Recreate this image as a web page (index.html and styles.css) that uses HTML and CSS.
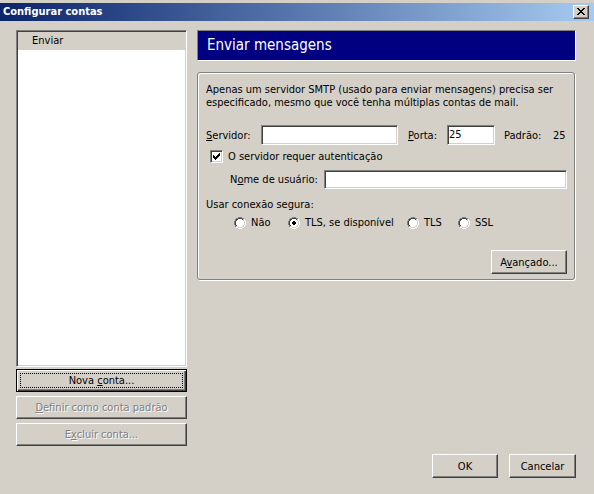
FILE: index.html
```html
<!DOCTYPE html>
<html>
<head>
<meta charset="utf-8">
<title>Configurar contas</title>
<link rel="stylesheet" href="styles.css">
</head>
<body>
<svg class="defs" width="0" height="0" aria-hidden="true">
  <symbol id="radio" viewBox="0 0 12 12">
    <path fill="#808080" d="M4 0h4v1h-4z M2 1h2v1h-2z M8 1h2v1h-2z M1 2h1v2h-1z M0 4h1v4h-1z M1 8h1v2h-1z"/>
    <path fill="#ffffff" d="M10 2h1v2h-1z M11 4h1v4h-1z M10 8h1v2h-1z M2 10h2v1h-2z M8 10h2v1h-2z M4 11h4v1h-4z"/>
    <path fill="#404040" d="M4 1h4v1h-4z M2 2h2v1h-2z M8 2h1v1h-1z M2 3h1v1h-1z M1 4h1v4h-1z M2 8h1v1h-1z"/>
    <path fill="#d4d0c8" d="M9 2h1v1h-1z M9 3h1v1h-1z M10 4h1v4h-1z M9 8h1v1h-1z M2 9h2v1h-2z M8 9h2v1h-2z M4 10h4v1h-4z"/>
    <path fill="#ffffff" d="M4 2h4v1h-4z M3 3h6v1h-6z M2 4h8v4h-8z M3 8h6v1h-6z M4 9h4v1h-4z"/>
  </symbol>
  <symbol id="dot" viewBox="0 0 12 12">
    <path fill="#000000" d="M5 4h2v1h-2z M4 5h4v2h-4z M5 7h2v1h-2z"/>
  </symbol>
</svg>
<div class="window">
  <div class="titlebar">
    <span class="title">Configurar contas</span>
    <button class="close" type="button" aria-label="Fechar">
      <svg class="close-x" width="8" height="7" viewBox="0 0 8 7" shape-rendering="crispEdges"><path fill="#000" d="M0 0h2v1h-2z M6 0h2v1h-2z M1 1h2v1h-2z M5 1h2v1h-2z M2 2h4v1h-4z M3 3h2v1h-2z M2 4h4v1h-4z M1 5h2v1h-2z M5 5h2v1h-2z M0 6h2v1h-2z M6 6h2v1h-2z"/></svg>
    </button>
  </div>
  <div class="client">
    <div class="main">
      <div class="left">
        <div class="list">
          <div class="list-item">Enviar</div>
        </div>
        <button class="btn btn-wide btn-default" type="button">Nova <u>c</u>onta...</button>
        <button class="btn btn-wide" type="button" disabled><u>D</u>efinir como conta padrão</button>
        <button class="btn btn-wide" type="button" disabled>E<u>x</u>cluir conta...</button>
      </div>
      <div class="right">
        <div class="header">Enviar mensagens</div>
        <div class="group">
          <p class="desc">Apenas um servidor SMTP (usado para enviar mensagens) precisa ser<br>especificado, mesmo que você tenha múltiplas contas de mail.</p>
          <div class="row row-server">
            <span class="lbl lbl-server"><u>S</u>ervidor:</span>
            <div class="field f-server"></div>
            <span class="lbl lbl-port"><u>P</u>orta:</span>
            <div class="field f-port">25</div>
            <span class="lbl lbl-def">Padrão:</span>
            <span class="def-val">25</span>
          </div>
          <div class="row row-check">
            <span class="checkbox"><svg class="check" width="7" height="7" viewBox="0 0 7 7" shape-rendering="crispEdges"><path fill="#000" d="M0 2h1v3h-1z M1 3h1v3h-1z M2 4h1v3h-1z M3 3h1v3h-1z M4 2h1v3h-1z M5 1h1v3h-1z M6 0h1v3h-1z"/></svg></span>
            <span class="check-label">O servidor requer autenticação</span>
          </div>
          <div class="row row-user">
            <span class="lbl lbl-user">N<u>o</u>me de usuário:</span>
            <div class="field f-user"></div>
          </div>
          <div class="sec-label">Usar conexão segura:</div>
          <div class="row row-radios">
            <span class="ri ri-1"><svg class="radio" viewBox="0 0 12 12" shape-rendering="crispEdges"><use href="#radio"/></svg>Não</span>
            <span class="ri ri-2"><svg class="radio" viewBox="0 0 12 12" shape-rendering="crispEdges"><use href="#radio"/><use href="#dot"/></svg>TLS, se disponível</span>
            <span class="ri ri-3"><svg class="radio" viewBox="0 0 12 12" shape-rendering="crispEdges"><use href="#radio"/></svg>TLS</span>
            <span class="ri ri-4"><svg class="radio" viewBox="0 0 12 12" shape-rendering="crispEdges"><use href="#radio"/></svg>SSL</span>
          </div>
          <button class="btn btn-adv" type="button">A<u>v</u>ançado...</button>
        </div>
      </div>
    </div>
    <div class="footer">
      <button class="btn btn-ok" type="button">OK</button>
      <button class="btn btn-cancel" type="button">Cancelar</button>
    </div>
  </div>
</div>
</body>
</html>
```

FILE: styles.css
```css
* {
  box-sizing: border-box;
}

html,
body {
  margin: 0;
  padding: 0;
}

body {
  width: 594px;
  height: 494px;
  overflow: hidden;
  background: #d4d0c8;
  color: #000;
  font-family: "DejaVu Sans Condensed", "DejaVu Sans", "Liberation Sans", sans-serif;
  font-stretch: condensed;
  font-size: 11px;
  line-height: 13px;
}

.defs {
  display: block;
  width: 0;
  height: 0;
  overflow: hidden;
}

.window {
  width: 594px;
  height: 494px;
  display: flex;
  flex-direction: column;
  padding-top: 3px;
}

/* Title bar */
.titlebar {
  height: 18px;
  flex: none;
  display: flex;
  align-items: center;
  justify-content: space-between;
  padding-left: 3px;
  padding-right: 5px;
  background: linear-gradient(to right, #0a246a, #a6caf0);
}

.title {
  color: #fff;
  font-weight: bold;
  line-height: 18px;
  white-space: nowrap;
}

.close {
  width: 16px;
  height: 14px;
  padding: 0;
  margin: 0;
  background: #d4d0c8;
  border: 1px solid;
  border-color: #fff #404040 #404040 #fff;
  box-shadow: inset -1px -1px #808080;
  display: flex;
  align-items: center;
  justify-content: center;
}

.close-x {
  display: block;
  margin-left: -1px;
  margin-top: -1px;
}

/* Client area */
.client {
  flex: 1;
  display: flex;
  flex-direction: column;
  padding: 9px 18px 0 16px;
}

.main {
  height: 416px;
  display: flex;
  gap: 10px;
}

.left {
  width: 171px;
  display: flex;
  flex-direction: column;
  gap: 4px;
}

.list {
  flex: 1;
  margin-bottom: -2px;
  background: #fff;
  border: 1px solid;
  border-color: #808080 #fff #fff #808080;
  box-shadow: inset 1px 1px #404040, inset -1px -1px #d4d0c8;
  padding: 1px;
}

.list-item {
  height: 18px;
  line-height: 18px;
  background: #d4d0c8;
  padding-left: 14px;
}

/* Buttons */
.btn {
  font: inherit;
  font-stretch: condensed;
  color: #000;
  background: #d4d0c8;
  border: 1px solid;
  border-color: #fff #404040 #404040 #fff;
  box-shadow: inset -1px -1px #808080;
  padding: 0;
  margin: 0;
  text-align: center;
  white-space: nowrap;
}

.btn:disabled {
  color: #808080;
  text-shadow: 1px 1px 0 #fff;
}

.btn-wide {
  height: 23px;
  flex: none;
}

.btn-default {
  border: 1px solid #000;
  box-shadow: inset 1px 1px #fff, inset -1px -1px #404040, inset -2px -2px #808080;
  outline: 1px dotted #000;
  outline-offset: -5px;
}

.right {
  width: 379px;
  display: flex;
  flex-direction: column;
}

.header {
  height: 31px;
  flex: none;
  background: #000080;
  border: 1px solid;
  border-color: #808080 #fff #fff #808080;
  color: #fff;
  font-size: 15px;
  padding-left: 9px;
  display: flex;
  align-items: center;
}

.group {
  margin-top: 11px;
  width: 378px;
  border: 1px solid #808080;
  border-radius: 3px;
  box-shadow: inset 1px 1px #fff, 1px 1px #fff;
  padding: 10px 7px 5px 8px;
  display: flex;
  flex-direction: column;
}

.desc {
  margin: 0;
  line-height: 13px;
  white-space: nowrap;
}

.row {
  display: flex;
  align-items: center;
  white-space: nowrap;
}

.field {
  height: 20px;
  flex: none;
  background: #fff;
  border: 1px solid;
  border-color: #808080 #fff #fff #808080;
  box-shadow: inset 1px 1px #404040, inset -1px -1px #d4d0c8;
  padding-left: 1px;
  line-height: 18px;
}

.row-server {
  margin-top: 16px;
  height: 20px;
}

.lbl {
  flex: none;
}

.lbl-server {
  width: 55px;
}

.f-server {
  width: 137px;
}

.lbl-port {
  margin-left: 10px;
  width: 39px;
}

.f-port {
  width: 48px;
}

.lbl-def {
  margin-left: 9px;
  width: 49px;
}

.row-check {
  margin-top: 5px;
  height: 13px;
  padding-left: 4px;
}

.checkbox {
  width: 13px;
  height: 13px;
  flex: none;
  background: #fff;
  border: 1px solid;
  border-color: #808080 #fff #fff #808080;
  box-shadow: inset 1px 1px #404040, inset -1px -1px #d4d0c8;
  padding: 2px;
  margin-right: 5px;
}

.check {
  display: block;
}

.row-user {
  margin-top: 7px;
  height: 19px;
  padding-left: 24px;
}

.lbl-user {
  width: 94px;
}

.f-user {
  width: 243px;
  height: 19px;
}

.sec-label {
  margin-top: 9px;
  line-height: 13px;
}

.row-radios {
  margin-top: 6px;
  height: 12px;
  padding-left: 28px;
}

.ri {
  display: flex;
  align-items: center;
  line-height: 12px;
  flex: none;
}

.radio {
  width: 12px;
  height: 12px;
  margin-right: 5px;
  flex: none;
}

.ri-1 {
  width: 54px;
}

.ri-2 {
  width: 119px;
}

.ri-3 {
  width: 51px;
}

.btn-adv {
  margin-top: 21px;
  align-self: flex-end;
  width: 76px;
  height: 24px;
}

.footer {
  display: flex;
  justify-content: flex-end;
  gap: 11px;
  margin-top: 8px;
}

.btn-ok {
  width: 66px;
  height: 24px;
}

.btn-cancel {
  width: 67px;
  height: 24px;
}
```
